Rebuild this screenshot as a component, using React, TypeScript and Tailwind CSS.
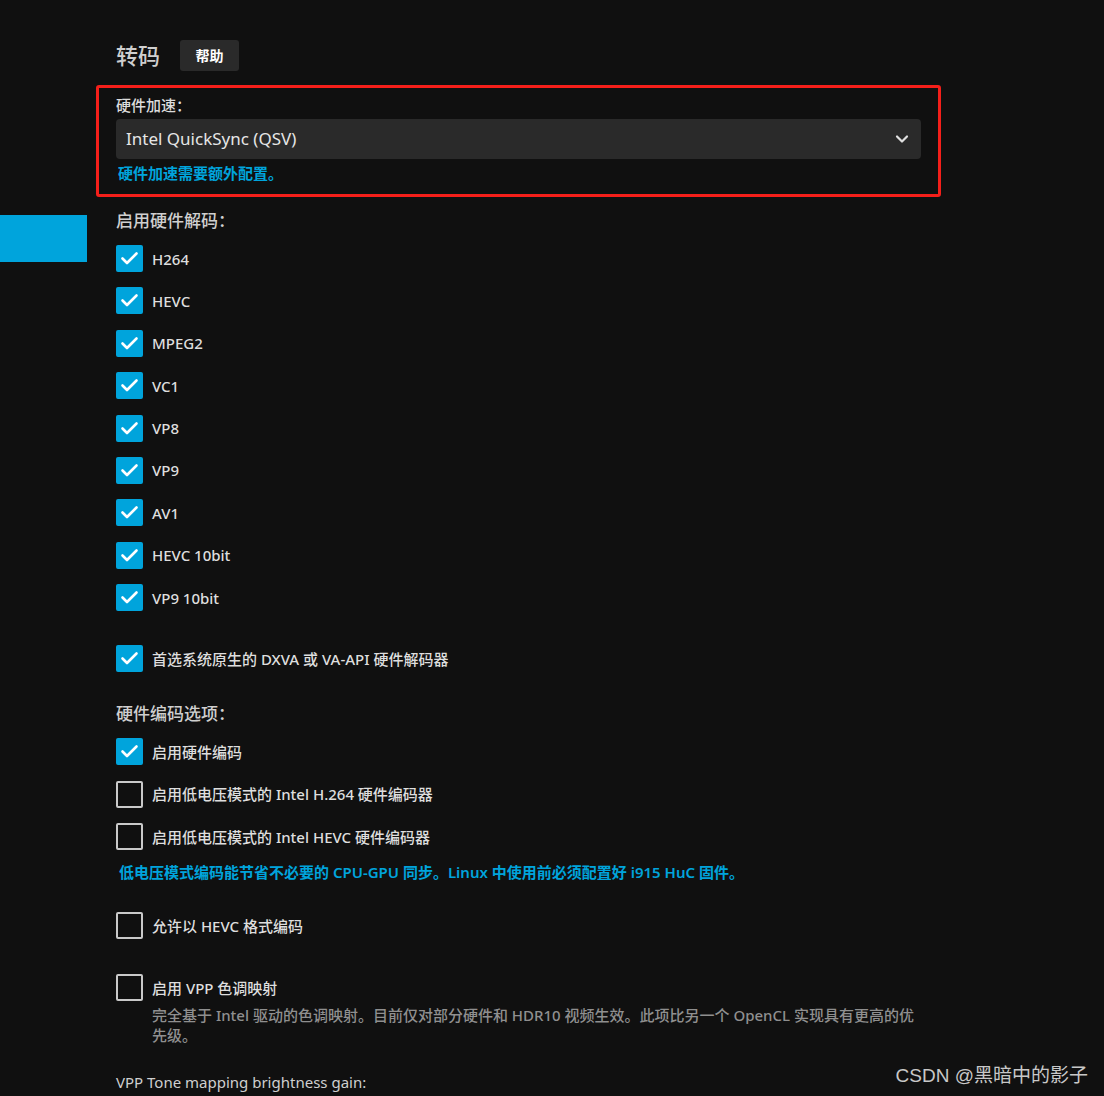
import React from 'react';

const FONT = { fontFamily: '"Noto Sans", "Noto Sans CJK SC", sans-serif' };

const decoders = ['H264', 'HEVC', 'MPEG2', 'VC1', 'VP8', 'VP9', 'AV1', 'HEVC 10bit', 'VP9 10bit'];

const Check = ({ checked, label }: { checked: boolean; label: string }) => (
  <div className="flex items-center h-[27px]">
    {checked ? (
      <div className="w-[27px] h-[27px] rounded-[2px] bg-[#00a4dc] flex items-center justify-center shrink-0">
        <svg width="27" height="27" viewBox="0 0 27 27" fill="none">
          <path d="M6.5 13.5 L11 18 L20.5 8.5" stroke="#fff" strokeWidth="2.6" strokeLinecap="round" strokeLinejoin="round" />
        </svg>
      </div>
    ) : (
      <div className="w-[27px] h-[27px] rounded-[2px] border-2 border-[#c9c9c9] shrink-0" />
    )}
    <span className="ml-[9px] text-[15px] text-[#dedede] font-medium leading-[20px]">{label}</span>
  </div>
);

export default function App() {
  return (
    <div className="relative min-h-[1096px] bg-[#101010] overflow-hidden" style={FONT}>
      {/* sidebar active item */}
      <div className="absolute left-0 top-[215px] w-[87px] h-[47px] bg-[#00a4dc]" />

      <div className="pl-[116px] pt-[40px]">
        <div className="flex items-center h-[31px] gap-[20px]">
          <h2 className="text-[22px] text-[#cfcfcf] font-medium leading-[31px]">转码</h2>
          <button className="w-[59px] h-[31px] rounded-[3px] bg-[#2a2a2a] text-[14px] font-bold text-white">帮助</button>
        </div>

        <div className="mt-[14px] -ml-[20px] w-[845px] border-[3px] border-[#f41f1a] rounded-[3px] pt-[7px] pb-[11px] px-[17px]">
          <div className="h-[20px] leading-[20px] text-[15px] text-[#dcdcdc] font-medium">硬件加速：</div>
          <div className="mt-[4px] h-[40px] rounded-[4px] bg-[#2a2a2a] flex items-center justify-between pl-[10px] pr-[12px]">
            <span className="text-[17px] text-[#e6e6e6]">Intel QuickSync (QSV)</span>
            <svg width="14" height="14" viewBox="0 0 14 14" fill="none">
              <path d="M2 4.5 L7 9.5 L12 4.5" stroke="#e0e0e0" strokeWidth="2.2" strokeLinecap="round" strokeLinejoin="round" />
            </svg>
          </div>
          <div className="mt-[4px] h-[20px] leading-[20px] pl-[2px] text-[15px] font-semibold text-[#00a4dc]">硬件加速需要额外配置。</div>
        </div>

        <div className="mt-[12px] h-[24px] leading-[24px] text-[17px] text-[#cfcfcf] font-medium">启用硬件解码：</div>
        <div className="mt-[12px] flex flex-col gap-[15.4px]">
          {decoders.map((d) => (
            <Check key={d} checked label={d} />
          ))}
        </div>

        <div className="mt-[34px]">
          <Check checked label="首选系统原生的 DXVA 或 VA-API 硬件解码器" />
        </div>

        <div className="mt-[29.5px] h-[24px] leading-[24px] text-[17px] text-[#cfcfcf] font-medium">硬件编码选项：</div>
        <div className="mt-[12.5px] flex flex-col gap-[15.5px]">
          <Check checked label="启用硬件编码" />
          <Check checked={false} label="启用低电压模式的 Intel H.264 硬件编码器" />
          <Check checked={false} label="启用低电压模式的 Intel HEVC 硬件编码器" />
        </div>
        <div className="mt-[11.5px] h-[20px] leading-[20px] pl-[3px] text-[15px] font-semibold text-[#00a4dc]">
          低电压模式编码能节省不必要的 CPU-GPU 同步。Linux 中使用前必须配置好 i915 HuC 固件。
        </div>

        <div className="mt-[30.5px]">
          <Check checked={false} label="允许以 HEVC 格式编码" />
        </div>

        <div className="mt-[35px]">
          <Check checked={false} label="启用 VPP 色调映射" />
        </div>
        <p className="mt-[3.5px] ml-[36px] w-[768px] text-[15px] leading-[20px] text-[#8f8f8f] font-medium">
          完全基于 Intel 驱动的色调映射。目前仅对部分硬件和 HDR10 视频生效。此项比另一个 OpenCL 实现具有更高的优先级。
        </p>

        <div className="mt-[25px] h-[24px] leading-[24px] text-[15px] text-[#cfcfcf]">VPP Tone mapping brightness gain:</div>
      </div>

      {/* watermark */}
      <div
        className="absolute right-[16px] top-[1064px] text-[19px] leading-[24px] text-[#c8c8c8]"
        style={{ fontFamily: '"Liberation Sans", "Noto Sans CJK SC", sans-serif' }}
      >
        CSDN @黑暗中的影子
      </div>
    </div>
  );
}
